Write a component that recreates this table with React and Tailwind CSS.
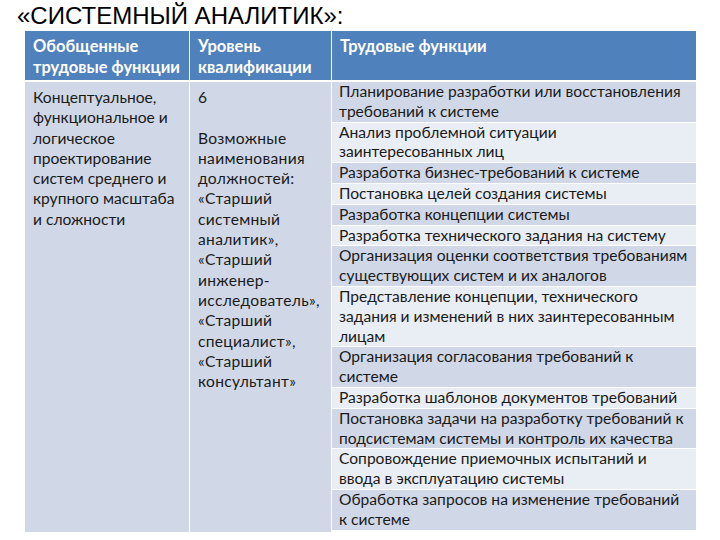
const functions = [
  ["Планирование разработки или восстановления", "требований к системе"],
  ["Анализ проблемной ситуации", "заинтересованных лиц"],
  ["Разработка бизнес-требований к системе"],
  ["Постановка целей создания системы"],
  ["Разработка концепции системы"],
  ["Разработка технического задания на систему"],
  ["Организация оценки соответствия требованиям", "существующих систем и их аналогов"],
  ["Представление концепции, технического", "задания и изменений в них заинтересованным", "лицам"],
  ["Организация согласования требований к", "системе"],
  ["Разработка шаблонов документов требований"],
  ["Постановка задачи на разработку требований к", "подсистемам системы и контроль их качества"],
  ["Сопровождение приемочных испытаний и", "ввода в эксплуатацию системы"],
  ["Обработка запросов на изменение требований", "к системе"],
];

const positions = [
  "6",
  "\u00a0",
  "Возможные",
  "наименования",
  "должностей:",
  "«Старший",
  "системный",
  "аналитик»,",
  "«Старший",
  "инженер-",
  "исследователь»,",
  "«Старший",
  "специалист»,",
  "«Старший",
  "консультант»",
];

const App = () => {
  return (
    <div
      className="w-[720px] h-[540px] bg-white overflow-hidden"
      style={{ fontFamily: "Lato, 'Open Sans', sans-serif" }}
    >
      {/* TITLE */}
      <div className="h-[31px] pl-[17px] pt-[3px] text-[24px] leading-[26px] text-black font-['Liberation_Sans',Arial,sans-serif]">
        «СИСТЕМНЫЙ АНАЛИТИК»:
      </div>

      {/* TABLE */}
      <div className="ml-[25px] w-[671px] grid grid-cols-[164px_141px_364px] gap-[1px] bg-white text-[15.6px] leading-[19.8px]">
        {/* HEADER */}
        <div className="bg-[#4f81bd] text-white font-bold text-[16.5px] leading-[21px] px-2 pt-[5px] h-[49px]">
          <div>Обобщенные</div>
          <div>трудовые функции</div>
        </div>
        <div className="bg-[#4f81bd] text-white font-bold text-[16.5px] leading-[21px] px-2 pt-[5px] h-[49px]">
          <div>Уровень</div>
          <div>квалификации</div>
        </div>
        <div className="bg-[#4f81bd] text-white font-bold text-[16.5px] leading-[21px] px-2 pt-[5px] h-[49px]">
          <div>Трудовые функции</div>
        </div>

        {/* BODY */}
        <div className="bg-[#d0d8e8] text-[#1a1a1a] px-2 pt-[5px] mt-[1px] h-[450px] leading-[20.3px]">
          <div>Концептуальное,</div>
          <div>функциональное и</div>
          <div>логическое</div>
          <div>проектирование</div>
          <div>систем среднего и</div>
          <div>крупного масштаба</div>
          <div>и сложности</div>
        </div>
        <div className="bg-[#d0d8e8] text-[#1a1a1a] px-2 pt-[5px] mt-[1px] h-[450px] leading-[20.3px] tracking-[0.3px]">
          {positions.map((line, i) => (
            <div key={i}>{line}</div>
          ))}
        </div>
        <div className="mt-[1px] flex flex-col gap-[1px] bg-white">
          {functions.map((lines, i) => (
            <div
              key={i}
              className={`px-[7px] text-[#1a1a1a] ${i % 2 === 0 ? "bg-[#d0d8e8]" : "bg-[#e9edf4]"}`}
            >
              {lines.map((l, j) => (
                <div key={j} className="whitespace-nowrap">{l}</div>
              ))}
            </div>
          ))}
        </div>
      </div>
    </div>
  );
};

export default App;
